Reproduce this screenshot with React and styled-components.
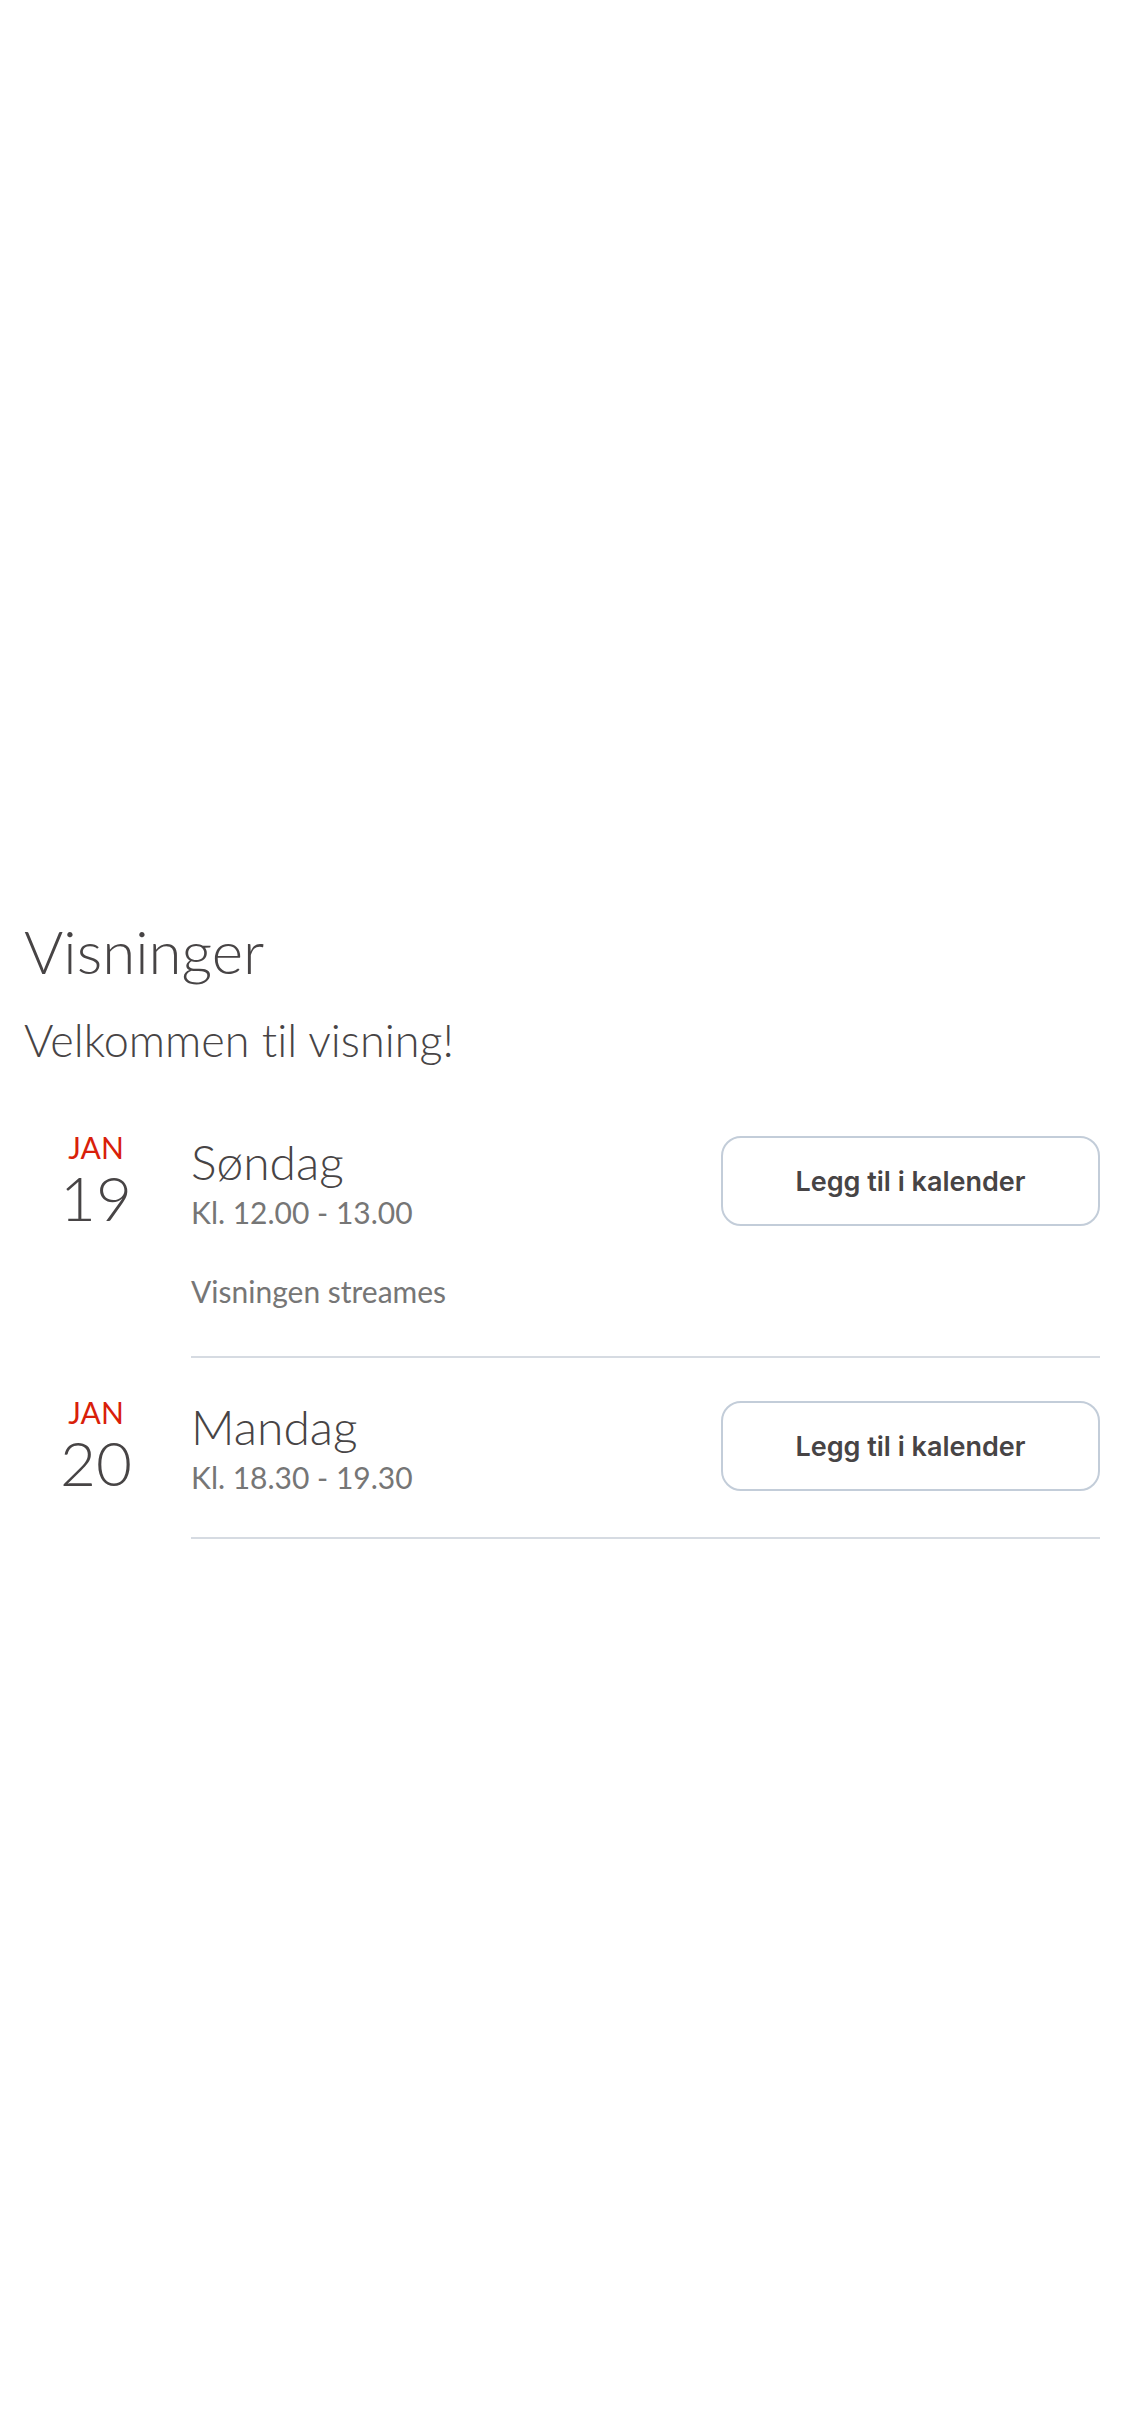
import React from "react";
import styled, { createGlobalStyle } from "styled-components";

const GlobalStyle = createGlobalStyle`
  body {
    margin: 0;
    background: #ffffff;
    font-family: Lato, "Noto Sans", "Liberation Sans", sans-serif;
    font-variant-ligatures: none;
    color: #474445;
  }
`;

const Page = styled.div`
  padding: 916px 25px 0px 24px;
  min-height: 2436px;
  box-sizing: border-box;
`;

const Title = styled.h1`
  margin: 0;
  font-size: 60px;
  line-height: 70px;
  font-weight: 300;
`;

const Subtitle = styled.h2`
  margin: 27px 0px 0px 0px;
  font-size: 45px;
  line-height: 54px;
  font-weight: 300;
`;

const List = styled.div`
  margin-top: 65px;
  display: flex;
  flex-direction: column;
`;

const Row = styled.div`
  display: grid;
  grid-template-columns: 167px 1fr;
  padding-top: ${(props) => (props.first ? "0px" : "39px")};
`;

const DateBox = styled.div`
  display: flex;
  flex-direction: column;
  align-items: center;
  width: 144px;
`;

const Month = styled.span`
  font-size: 30px;
  line-height: 30px;
  color: #d91f0a;
  font-weight: 400;
`;

const Day = styled.span`
  margin-top: 3px;
  font-size: 62px;
  line-height: 64px;
  font-weight: 300;
`;

const Body = styled.div`
  border-bottom: 2px solid #d6dbe2;
  padding: 4px 0px 42px 0px;
`;

const Top = styled.div`
  display: flex;
  justify-content: space-between;
  align-items: flex-start;
`;

const Info = styled.div`
  display: flex;
  flex-direction: column;
`;

const Weekday = styled.span`
  font-size: 48px;
  line-height: 52px;
  font-weight: 300;
`;

const Time = styled.span`
  margin-top: 6px;
  font-size: 30px;
  line-height: 36px;
  color: #767676;
  font-weight: 400;
`;

const Note = styled.div`
  margin-top: 43px;
  padding-bottom: 5px;
  font-size: 30px;
  line-height: 36px;
  color: #767676;
`;

const CalendarButton = styled.button`
  flex-shrink: 0;
  width: 379px;
  height: 90px;
  border: 2px solid #c3cdd9;
  border-radius: 20px;
  background: #ffffff;
  font-family: Inter, "Noto Sans", sans-serif;
  font-size: 27px;
  font-weight: 600;
  color: #474445;
  cursor: pointer;
`;

const viewings = [
  { month: "JAN", day: "19", weekday: "Søndag", time: "Kl. 12.00 - 13.00", note: "Visningen streames" },
  { month: "JAN", day: "20", weekday: "Mandag", time: "Kl. 18.30 - 19.30" },
];

const App = () => {
  return (
    <>
      <GlobalStyle />
      <Page>
        <Title>Visninger</Title>
        <Subtitle>Velkommen til visning!</Subtitle>
        <List>
          {viewings.map((item, index) => (
            <Row first={index === 0} key={index}>
              <DateBox>
                <Month>{item.month}</Month>
                <Day>{item.day}</Day>
              </DateBox>
              <Body>
                <Top>
                  <Info>
                    <Weekday>{item.weekday}</Weekday>
                    <Time>{item.time}</Time>
                  </Info>
                  <CalendarButton>Legg til i kalender</CalendarButton>
                </Top>
                {item.note && <Note>{item.note}</Note>}
              </Body>
            </Row>
          ))}
        </List>
      </Page>
    </>
  );
};

export default App;
